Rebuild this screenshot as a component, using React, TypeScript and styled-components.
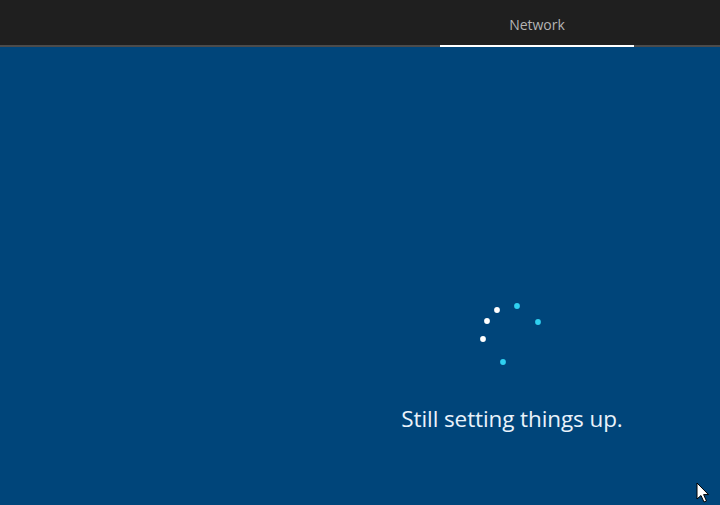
import styled, { createGlobalStyle } from 'styled-components';

const GlobalStyle = createGlobalStyle`
  html, body {
    margin: 0;
    padding: 0;
    height: 100%;
    background: #00457a;
    overflow: hidden;
  }
  #root {
    height: 100%;
  }
`;

const Screen = styled.div`
  position: relative;
  display: flex;
  flex-direction: column;
  width: 720px;
  height: 505px;
  background: #00457a;
  font-family: 'Open Sans', 'Noto Sans', sans-serif;
`;

const TopBar = styled.div`
  display: flex;
  justify-content: flex-end;
  height: 45px;
  padding-right: 86px;
  background: #1f1f1f;
  border-bottom: 2px solid #4b4b4b;
`;

const Tab = styled.div<{ active: boolean }>`
  display: flex;
  align-items: center;
  justify-content: center;
  width: 194px;
  margin-bottom: -2px;
  padding-top: 3px;
  border-bottom: 2px solid ${(p) => (p.active ? '#ffffff' : 'transparent')};
  color: #b4b4b4;
  font-size: 14px;
`;

const Body = styled.div`
  flex: 1;
  display: flex;
  padding-left: 362px;
`;

const Status = styled.div`
  width: 300px;
  display: flex;
  flex-direction: column;
  align-items: center;
  padding-top: 252px;
`;

const Message = styled.div`
  margin-top: 36px;
  color: #eaf2fa;
  font-size: 22.5px;
  letter-spacing: -0.1px;
  line-height: 28px;
`;

const Pointer = styled.svg`
  position: absolute;
  left: 696px;
  top: 482px;
`;

const dots = [
  { x: 517, y: 305, c: '#2fd0f0' },
  { x: 538, y: 321, c: '#2fd0f0' },
  { x: 503, y: 361, c: '#2fd0f0' },
  { x: 497, y: 309, c: '#ffffff' },
  { x: 487, y: 320, c: '#ffffff' },
  { x: 483, y: 338, c: '#ffffff' },
];

function Spinner() {
  // viewBox uses page coordinates; the box starts at (472, 298)
  return (
    <svg width="76" height="70" viewBox="472 298 76 70" style={{ marginLeft: -4 }}>
      {dots.map((d, i) => (
        <circle key={i} cx={d.x} cy={d.y} r={2.9} fill={d.c} />
      ))}
    </svg>
  );
}

export default function App() {
  return (
    <>
      <GlobalStyle />
      <Screen>
        <TopBar>
          <Tab active>Network</Tab>
        </TopBar>
        <Body>
          <Status>
            <Spinner />
            <Message>Still setting things up.</Message>
          </Status>
        </Body>
        <Pointer width="14" height="22" viewBox="0 0 14 22">
          <path d="M1 1 L1 17 L5 13.5 L8 20 L10.5 19 L7.6 12.6 L12.5 12.6 Z" fill="#ffffff" stroke="#000000" strokeWidth="1" />
        </Pointer>
      </Screen>
    </>
  );
}
